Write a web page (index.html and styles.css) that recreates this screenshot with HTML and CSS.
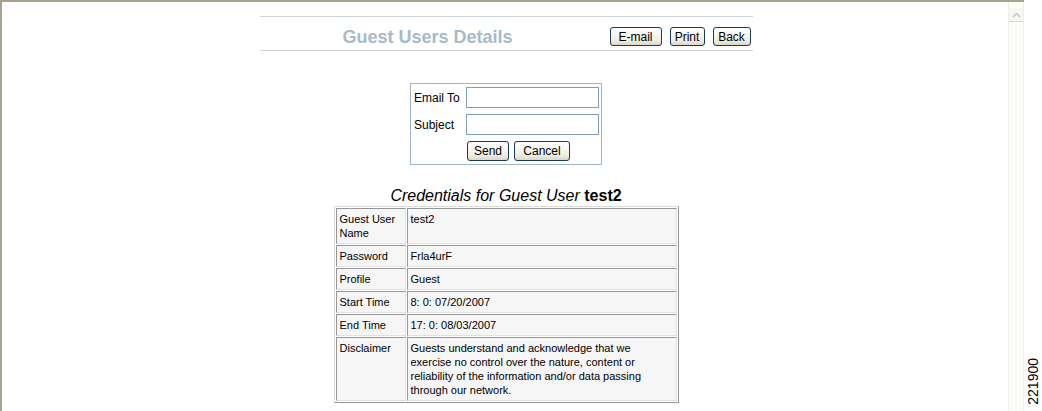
FILE: index.html
```html
<!DOCTYPE html>
<html lang="en">
<head>
  <meta charset="UTF-8" />
  <title>Guest Users Details</title>
  <link rel="stylesheet" href="styles.css">
</head>

<body>
  <div class="window">
    <div class="frame">
      <div class="page">

        <div class="header">
          <div class="title">Guest Users Details</div>
          <div class="actions">
            <button class="btn btn-email">E-mail</button>
            <button class="btn btn-print">Print</button>
            <button class="btn btn-back">Back</button>
          </div>
        </div>

        <div class="mail-box">
          <label class="mail-label">Email To</label>
          <input class="mail-input" type="text" />
          <label class="mail-label">Subject</label>
          <input class="mail-input" type="text" />
          <span></span>
          <div class="mail-buttons">
            <button class="btn btn-send">Send</button>
            <button class="btn btn-cancel">Cancel</button>
          </div>
        </div>

        <h2 class="cred-title"><em>Credentials for Guest User</em> <b>test2</b></h2>

        <table class="cred-table">
          <tr>
            <td class="key">Guest User Name</td>
            <td>test2</td>
          </tr>
          <tr>
            <td class="key">Password</td>
            <td>Frla4urF</td>
          </tr>
          <tr>
            <td class="key">Profile</td>
            <td>Guest</td>
          </tr>
          <tr>
            <td class="key">Start Time</td>
            <td>8: 0: 07/20/2007</td>
          </tr>
          <tr>
            <td class="key">End Time</td>
            <td>17: 0: 08/03/2007</td>
          </tr>
          <tr>
            <td class="key">Disclaimer</td>
            <td>Guests understand and acknowledge that we exercise no control over the nature, content or reliability of the information and/or data passing through our network.</td>
          </tr>
        </table>

      </div>

      <div class="scrollbar">
        <div class="scroll-up">
          <svg width="9" height="6" viewBox="0 0 9 6">
            <path d="M1 5 L4.5 1.5 L8 5" fill="none" stroke="rgb(190, 196, 200)" stroke-width="1.5" />
          </svg>
        </div>
      </div>
    </div>

    <div class="side-note"><span>221900</span></div>
  </div>
</body>
</html>
```

FILE: styles.css
```css
* {
  box-sizing: border-box;
  margin: 0;
  padding: 0;
}

body {
  background-color: white;
  font-family: "Liberation Sans", Arial, sans-serif;
  height: 411px;
  overflow: hidden;
}

.window {
  display: flex;
  height: 411px;
}

.frame {
  width: 1024px;
  height: 411px;
  display: flex;
  border-top: 2px solid rgb(168, 162, 146);
  border-left: 2px solid rgb(168, 162, 146);
}

.page {
  flex: 1;
  padding-top: 14px;
  padding-left: 2px;
  display: flex;
  flex-direction: column;
  align-items: center;
}

/* header bar */
.header {
  width: 493px;
  height: 35px;
  display: flex;
  align-items: center;
  border-top: 1px solid rgb(204, 212, 220);
  border-bottom: 1px solid rgb(204, 212, 220);
}

.title {
  width: 336px;
  text-align: center;
  font-size: 18px;
  font-weight: bold;
  color: rgb(168, 186, 202);
  padding-top: 8px;
}

.actions {
  flex: 1;
  display: flex;
  justify-content: flex-end;
  gap: 8px;
  padding-right: 2px;
  padding-top: 6px;
}

.btn {
  font-family: "Liberation Sans", Arial, sans-serif;
  font-size: 12px;
  color: black;
  height: 19px;
  border: 1px solid rgb(28, 56, 90);
  border-radius: 3px;
  background: linear-gradient(rgb(255, 255, 255), rgb(240, 238, 228) 70%, rgb(220, 216, 200));
  cursor: pointer;
}

.btn-email {
  width: 52px;
}
.btn-print {
  width: 35px;
}
.btn-back {
  width: 38px;
}

/* email form */
.mail-box {
  margin-top: 32px;
  width: 192px;
  border: 1px solid rgb(160, 180, 200);
  padding: 3px 2px 3px 2px;
  display: grid;
  grid-template-columns: 50px 133px;
  column-gap: 3px;
  row-gap: 6px;
  align-items: center;
}

.mail-label {
  font-size: 12px;
  padding-left: 1px;
}

.mail-input {
  height: 21px;
  width: 133px;
  border: 1px solid rgb(127, 157, 185);
  background-color: white;
}

.mail-buttons {
  display: flex;
  gap: 5px;
  padding-left: 1px;
}

.btn-send {
  width: 42px;
  height: 20px;
}
.btn-cancel {
  width: 56px;
  height: 20px;
}

/* credentials */
.cred-title {
  margin-top: 21px;
  font-size: 16px;
  font-weight: normal;
  line-height: 20px;
  color: black;
}

.cred-title b {
  font-weight: bold;
}

.cred-table {
  width: 345px;
  border-collapse: separate;
  border-spacing: 1px;
  border: 1px solid;
  border-color: rgb(220, 220, 220) rgb(150, 150, 150) rgb(150, 150, 150) rgb(220, 220, 220);
  font-size: 11px;
  line-height: 14px;
}

.cred-table td {
  vertical-align: top;
  background-color: rgb(246, 246, 246);
  padding: 3px;
  border: 1px solid;
  border-color: rgb(150, 150, 150) rgb(225, 225, 225) rgb(225, 225, 225) rgb(150, 150, 150);
}

.cred-table td.key {
  width: 70px;
}

/* fake scrollbar */
.scrollbar {
  width: 16px;
  background-color: rgb(252, 252, 248);
  border-left: 1px solid rgb(238, 238, 228);
  border-right: 1px solid rgb(238, 238, 228);
  padding-top: 6px;
}

.scroll-up {
  height: 14px;
  display: flex;
  align-items: center;
  justify-content: center;
  background-color: rgb(246, 246, 244);
  border-bottom: 1px solid rgb(212, 216, 220);
}

.side-note {
  flex: 1;
  display: flex;
  align-items: flex-end;
  justify-content: center;
  padding-bottom: 6px;
}

.side-note span {
  writing-mode: vertical-rl;
  transform: rotate(180deg);
  font-size: 14px;
  color: black;
}
```
